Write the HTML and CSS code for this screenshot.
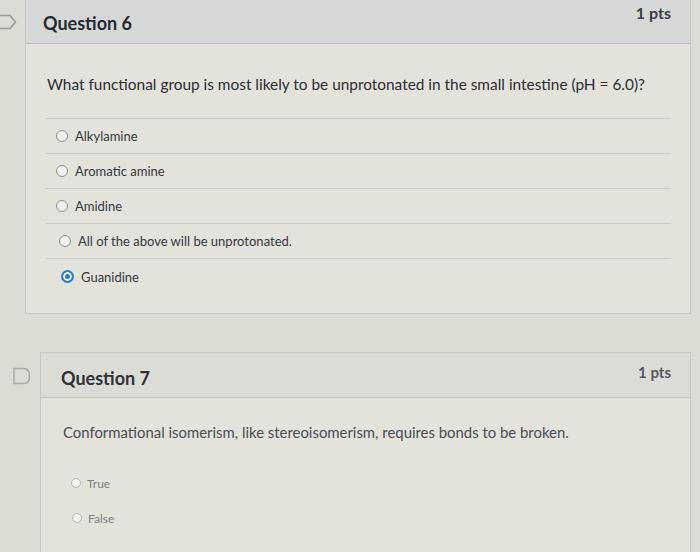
FILE: index.html
```html
<!DOCTYPE html>
<html>
<head>
<meta charset="utf-8">
<link rel="stylesheet" href="styles.css">
</head>
<body>
<div class="page">
  <div class="qrow q6">
    <div class="gutter">
      <svg class="flag" width="18" height="16" viewBox="0 0 18 16"><path d="M-4 1.5 H10 L15.5 8 L10 14.5 H-4" fill="none" stroke="#9a9a98" stroke-width="1.6" stroke-linejoin="round"/></svg>
    </div>
    <div class="card">
      <div class="head">
        <span class="title">Question 6</span>
        <span class="pts">1 pts</span>
      </div>
      <div class="body">
        <p class="qtext">What functional group is most likely to be unprotonated in the small intestine (pH = 6.0)?</p>
        <ul class="answers">
          <li><span class="radio"></span>Alkylamine</li>
          <li><span class="radio"></span>Aromatic amine</li>
          <li><span class="radio"></span>Amidine</li>
          <li><span class="radio"></span>All of the above will be unprotonated.</li>
          <li><span class="radio on"></span>Guanidine</li>
        </ul>
      </div>
    </div>
  </div>

  <div class="qrow q7">
    <div class="gutter">
      <svg class="flag" width="20" height="18" viewBox="0 0 20 18"><path d="M2 1.5 H12 Q17.5 1.5 17.5 9 Q17.5 16.5 12 16.5 H2 Z" fill="none" stroke="#a9aaa6" stroke-width="1.6" stroke-linejoin="round"/></svg>
    </div>
    <div class="card">
      <div class="head">
        <span class="title">Question 7</span>
        <span class="pts">1 pts</span>
      </div>
      <div class="body">
        <p class="qtext">Conformational isomerism, like stereoisomerism, requires bonds to be broken.</p>
        <ul class="answers">
          <li><span class="radio"></span>True</li>
          <li><span class="radio"></span>False</li>
        </ul>
      </div>
    </div>
  </div>
</div>
</body>
</html>
```

FILE: styles.css
```css
html, body {
  margin: 0;
  padding: 0;
  background: #dcdbd4;
  font-family: Lato, "Open Sans", sans-serif;
  overflow: hidden;
}
.page {
  display: flex;
  flex-direction: column;
  gap: 38px;
  width: 700px;
  height: 552px;
  overflow: hidden;
}
.qrow {
  display: flex;
  align-items: flex-start;
}
.gutter {
  flex: none;
  display: flex;
}
.q6 { margin-top: -2px; }
.q6 .gutter { width: 25px; }
.q6 .flag { margin-top: 16px; }
.q7 .gutter { width: 40px; }
.q7 .flag { margin-top: 15px; margin-left: 12px; }

.card {
  width: 649px;
  border: 1px solid #c6c6c2;
  background: #e3e3dc;
}
.q6 .card { width: 664px; }

.head {
  display: flex;
  justify-content: space-between;
  align-items: flex-start;
  height: 44px;
  padding: 0 19px 0 17px;
  background: #d6d8d8;
  border-bottom: 1px solid #b9bbbb;
}
.q7 .head {
  background: #dcdcd6;
  border-bottom-color: #c4c4bf;
  padding-left: 20px;
}
.title {
  margin-top: 14px;
  font-size: 18px;
  line-height: 20px;
  font-weight: 700;
  color: #262a2e;
}
.pts {
  margin-top: 4px;
  font-size: 16px;
  line-height: 20px;
  font-weight: 700;
  color: #3b3e44;
}
.q7 .title { margin-top: 15px; color: #2e3136; }
.q7 .pts { margin-top: 9px; color: #55585e; font-size: 15px; }

.body {
  padding: 30px 19px 19px 21px;
}
.qtext {
  margin: 0;
  font-size: 15.4px;
  line-height: 20px;
  color: #2b2e33;
}
.answers {
  list-style: none;
  margin: 24px 0 0 -1px;
  padding: 0;
}
.answers li {
  display: flex;
  align-items: center;
  height: 34px;
  border-top: 1px solid #cacbc8;
  font-size: 13px;
  color: #35383d;
}
.answers li:nth-child(n+4) { padding-left: 3px; }
.answers li:nth-child(5) { padding-left: 5px; height: 35px; }
.radio {
  box-sizing: border-box;
  width: 12px;
  height: 12px;
  margin: 0 7px 0 10px;
  border: 1.5px solid #8a8c92;
  border-radius: 50%;
  background: #f2f2ee;
  flex: none;
}
.radio.on {
  width: 13px;
  height: 13px;
  border: 2.5px solid #2a7ac4;
  background: #2a7ac4;
  box-shadow: inset 0 0 0 2px #f4f6f8;
}

.q7 .body { padding: 24px 19px 60px 22px; }
.q7 .qtext { font-size: 14.9px; color: #4a4d52; }
.q7 .answers { margin-top: 23px; }
.q7 .answers li {
  height: 34px;
  border-top: 1px solid transparent;
  font-size: 12px;
  color: #7c7e82;
  padding-left: 0;
}
.q7 .radio {
  width: 10px;
  height: 10px;
  border: 1px solid #b4b5b6;
  margin: 0 6px 0 9px;
}
.q7 .answers li:nth-child(2) .radio { margin-left: 10px; }
```
